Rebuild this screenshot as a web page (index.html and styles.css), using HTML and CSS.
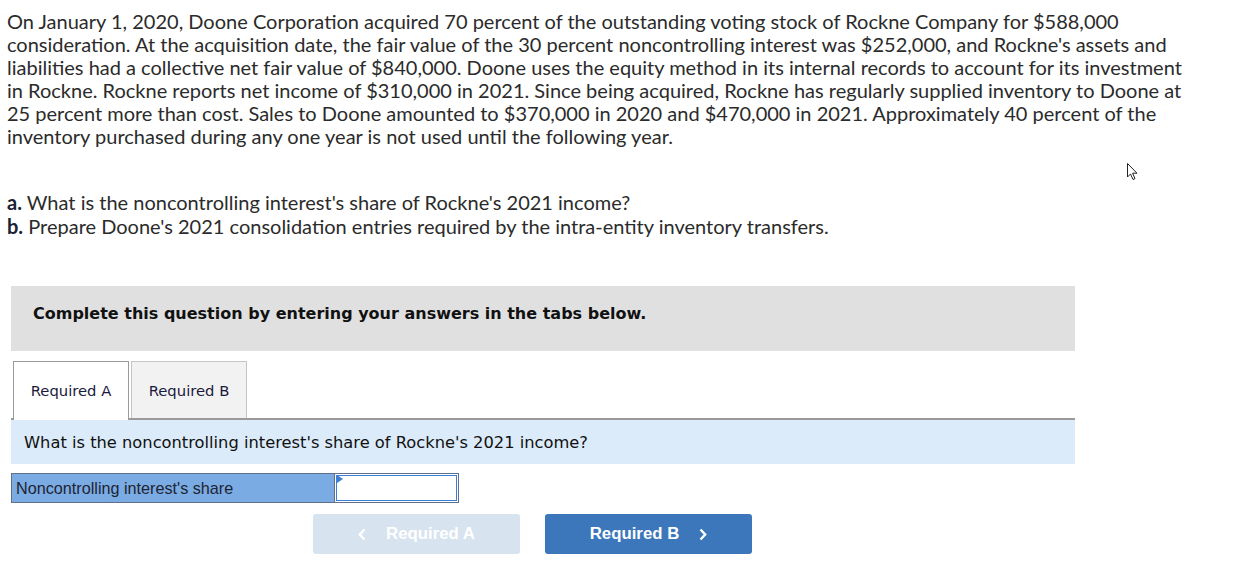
FILE: index.html
```html
<!DOCTYPE html>
<html>
<head>
<meta charset="utf-8">
<link rel="stylesheet" href="styles.css">
</head>
<body>
<div class="page">
  <p class="intro">On January 1, 2020, Doone Corporation acquired 70 percent of the outstanding voting stock of Rockne Company for $588,000 consideration. At the acquisition date, the fair value of the 30 percent noncontrolling interest was $252,000, and Rockne's assets and liabilities had a collective net fair value of $840,000. Doone uses the equity method in its internal records to account for its investment in Rockne. Rockne reports net income of $310,000 in 2021. Since being acquired, Rockne has regularly supplied inventory to Doone at 25 percent more than cost. Sales to Doone amounted to $370,000 in 2020 and $470,000 in 2021. Approximately 40 percent of the inventory purchased during any one year is not used until the following year.</p>
  <div class="parts">
    <div><b>a.</b> What is the noncontrolling interest's share of Rockne's 2021 income?</div>
    <div><b>b.</b> Prepare Doone's 2021 consolidation entries required by the intra-entity inventory transfers.</div>
  </div>
  <div class="panel">
    <div class="instructions">Complete this question by entering your answers in the tabs below.</div>
    <div class="tabs">
      <div class="tab active">Required A</div>
      <div class="tab">Required B</div>
    </div>
    <div class="question">What is the noncontrolling interest's share of Rockne's 2021 income?</div>
    <div class="answer-row">
      <div class="answer-label">Noncontrolling interest's share</div>
      <div class="answer-input"><span class="flag"></span></div>
    </div>
    <div class="nav">
      <button class="nav-btn prev"><svg class="chev" width="8" height="13" viewBox="0 0 8 13"><polyline points="6.5,1.5 1.8,6.5 6.5,11.5" fill="none" stroke="#fff" stroke-width="2.4"/></svg>Required A</button>
      <button class="nav-btn next">Required B<svg class="chev" width="8" height="13" viewBox="0 0 8 13"><polyline points="1.5,1.5 6.2,6.5 1.5,11.5" fill="none" stroke="#fff" stroke-width="2.4"/></svg></button>
    </div>
  </div>
</div>
<svg class="cursor" width="14" height="20" viewBox="0 0 14 20"><path d="M1.5 1.5 L1.5 15 L4.5 12 L7 17.5 L9 16.6 L6.6 11.2 L11 11.2 Z" fill="#fff" stroke="#222" stroke-width="1" stroke-linejoin="round"/></svg>
</body>
</html>
```
FILE: styles.css
```css
html, body { margin: 0; padding: 0; background: #fff; }
body { position: relative; }
.page { padding: 10px 0 0 7px; width: 1182px; }
.intro {
  margin: 0;
  font-family: Lato, "Liberation Sans", sans-serif;
  font-size: 20px;
  line-height: 23px;
  color: #2b2b2b;
}
.parts {
  margin-top: 42px;
  font-family: Lato, "Liberation Sans", sans-serif;
  font-size: 20px;
  line-height: 24px;
  color: #2b2b2b;
}
.parts b { color: #1a2233; }
.panel { margin: 48px 0 0 4px; width: 1064px; }
.instructions {
  background: #e0e0e0;
  height: 65px;
  box-sizing: border-box;
  display: flex;
  align-items: center;
  padding: 0 0 10px 22px;
  font-family: Verdana, "DejaVu Sans", sans-serif;
  font-size: 16px;
  font-weight: bold;
  color: #111;
}
.tabs {
  display: flex;
  align-items: flex-start;
  gap: 2px;
  margin-top: 10px;
  padding-left: 2px;
  border-bottom: 2px solid #9a9a9a;
  height: 57px;
}
.tab {
  width: 116px;
  height: 57px;
  box-sizing: border-box;
  border: 1px solid #c4c4c4;
  border-bottom: none;
  background: #f2f2f2;
  padding-top: 19px;
  text-align: center;
  font-family: Verdana, "DejaVu Sans", sans-serif;
  font-size: 14.8px;
  line-height: 20px;
  color: #1a1a40;
}
.tab.active {
  background: #fff;
  border-color: #9a9a9a;
  height: 59px;
  position: relative;
  z-index: 1;
}
.question {
  background: #dbebf9;
  height: 44px;
  display: flex;
  align-items: center;
  padding-left: 13px;
  font-family: Verdana, "DejaVu Sans", sans-serif;
  font-size: 16.3px;
  color: #111;
}
.answer-row {
  display: flex;
  margin-top: 9px;
  width: 448px;
  height: 30px;
  box-sizing: border-box;
  border: 1px solid #60708a;
}
.answer-label {
  width: 323px;
  background: #7aabe3;
  border-right: 1px solid #60708a;
  display: flex;
  align-items: center;
  padding-left: 4px;
  box-sizing: border-box;
  font-family: Arial, "Liberation Sans", sans-serif;
  font-size: 16.2px;
  color: #1e2433;
}
.answer-input {
  flex: 1;
  position: relative;
  border: 1px solid #3d7dd6;
  margin: 1px;
  background: #fff;
}
.flag {
  position: absolute;
  left: 0;
  width: 0;
  height: 0;
  border-top: 4px solid transparent;
  border-bottom: 4px solid transparent;
  border-left: 6px solid #3d7dd6;
  top: -1px;
}
.nav {
  display: flex;
  gap: 25px;
  margin: 11px 0 0 302px;
}
.nav-btn {
  width: 207px;
  height: 40px;
  border: none;
  border-radius: 3px;
  font-family: Arial, "Liberation Sans", sans-serif;
  font-weight: bold;
  font-size: 16.8px;
  color: #fff;
  display: flex;
  align-items: center;
  justify-content: center;
  gap: 20px;
  padding: 0;
}
.nav-btn.prev { background: #d8e3f0; }
.nav-btn.next { background: #3b77ba; }
.cursor { position: absolute; left: 1126px; top: 162px; }
```
